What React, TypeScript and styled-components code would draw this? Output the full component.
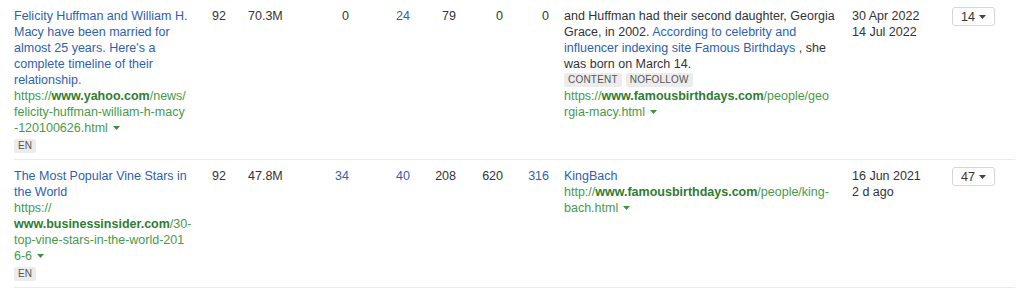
import React from 'react';
import styled, {createGlobalStyle} from 'styled-components';

const GlobalStyle = createGlobalStyle`
    html, body {
        margin: 0;
        padding: 0;
        background: #fff;
    }
    body {
        font-family: "Liberation Sans", Arial, Helvetica, sans-serif;
        font-size: 12.5px;
        line-height: 16px;
        color: #333;
    }
`;

// a url as shown in the table: the domain part is bold, lines wrap at fixed offsets
type UrlData = {
    href: string;
    domain: string;
    breaks: number[];
};

type Backlink = {
    title: string;
    source: UrlData;
    dr: string;
    traffic: string;
    metrics: {value: string; link?: boolean}[];
    anchorBefore?: string;
    anchorLink?: string;
    anchorAfter?: string;
    tags?: string[];
    target: UrlData;
    firstSeen: string;
    lastSeen: string;
    count: string;
};

const rows: Backlink[] = [
    {
        title: "Felicity Huffman and William H. Macy have been married for almost 25 years. Here's a complete timeline of their relationship.",
        source: {
            href: "https://www.yahoo.com/news/felicity-huffman-william-h-macy-120100626.html",
            domain: "www.yahoo.com",
            breaks: [27, 58],
        },
        dr: "92",
        traffic: "70.3M",
        metrics: [{value: "0"}, {value: "24", link: true}, {value: "79"}, {value: "0"}, {value: "0"}],
        anchorBefore: "and Huffman had their second daughter, Georgia Grace, in 2002. ",
        anchorLink: "According to celebrity and influencer indexing site Famous Birthdays",
        anchorAfter: " , she was born on March 14.",
        tags: ["CONTENT", "NOFOLLOW"],
        target: {
            href: "https://www.famousbirthdays.com/people/georgia-macy.html",
            domain: "www.famousbirthdays.com",
            breaks: [42],
        },
        firstSeen: "30 Apr 2022",
        lastSeen: "14 Jul 2022",
        count: "14",
    },
    {
        title: "The Most Popular Vine Stars in the World",
        source: {
            href: "https://www.businessinsider.com/30-top-vine-stars-in-the-world-2016-6",
            domain: "www.businessinsider.com",
            breaks: [8, 35, 66],
        },
        dr: "92",
        traffic: "47.8M",
        metrics: [{value: "34", link: true}, {value: "40", link: true}, {value: "208"}, {value: "620"}, {value: "316", link: true}],
        anchorLink: "KingBach",
        target: {
            href: "http://www.famousbirthdays.com/people/king-bach.html",
            domain: "www.famousbirthdays.com",
            breaks: [43],
        },
        firstSeen: "16 Jun 2021",
        lastSeen: "2 d ago",
        count: "47",
    },
];

const Caret: React.FC<{color: string}> = ({color}) => (
    <CaretSvg width="7" height="4" viewBox="0 0 7 4">
        <path d="M0 0 L7 0 L3.5 4 Z" fill={color}/>
    </CaretSvg>
);

const UrlLines: React.FC<{url: UrlData}> = ({url}) => {
    const {href, domain, breaks} = url;
    const ds = href.indexOf(domain);
    const de = ds + domain.length;
    const edges = [0, ...breaks, href.length];

    return (
        <Url>
            {edges.slice(0, -1).map((s, i) => {
                const e = edges[i + 1];
                const a = Math.max(s, Math.min(e, ds));
                const b = Math.max(a, Math.min(e, de));
                return (
                    <UrlLine key={i}>
                        {href.slice(s, a)}
                        {b > a ? <Domain>{href.slice(a, b)}</Domain> : null}
                        {href.slice(b, e)}
                        {i === edges.length - 2 ? <Caret color="#3f913f"/> : null}
                    </UrlLine>
                );
            })}
        </Url>
    );
};

export default function App() {
    return (
        <>
            <GlobalStyle/>
            <Table>
                {rows.map((row, i) => (
                    <Row key={i}>
                        <TitleCell>
                            <Title>{row.title}</Title>
                            <UrlLines url={row.source}/>
                            <TagRow $spaced>
                                <Tag>EN</Tag>
                            </TagRow>
                        </TitleCell>
                        <Cell>{row.dr}</Cell>
                        <Cell>{row.traffic}</Cell>
                        {row.metrics.map((m, j) => (
                            <NumCell key={j} $link={m.link}>{m.value}</NumCell>
                        ))}
                        <AnchorCell>
                            <div>
                                {row.anchorBefore}
                                <AnchorLink>{row.anchorLink}</AnchorLink>
                                {row.anchorAfter}
                            </div>
                            {row.tags ? (
                                <TagRow>
                                    {row.tags.map(t => <Tag key={t}>{t}</Tag>)}
                                </TagRow>
                            ) : null}
                            <UrlLines url={row.target}/>
                        </AnchorCell>
                        <Cell>
                            <div>{row.firstSeen}</div>
                            <div>{row.lastSeen}</div>
                        </Cell>
                        <Cell>
                            <Select>
                                {row.count}
                                <Caret color="#444"/>
                            </Select>
                        </Cell>
                    </Row>
                ))}
            </Table>
        </>
    );
}

const Table = styled.div`
    display: grid;
    margin-left: 14px;
    width: 1001px;
`;
const Row = styled.div`
    display: grid;
    grid-template-columns: 198px 36px 52px 49px 61px 46px 47px 46px 303px 100px 1fr;
    padding: 8px 0 5px;
    border-bottom: 1px solid #ebebeb;
`;
const Cell = styled.div`
    min-width: 0;
`;
const TitleCell = styled(Cell)`
    padding-right: 19px;
`;
const NumCell = styled(Cell)<{$link?: boolean}>`
    text-align: right;
    color: ${p => p.$link ? '#2f5fad' : '#333'};
`;
const AnchorCell = styled(Cell)`
    padding: 0 14px 0 15px;
`;
const Title = styled.div`
    color: #2f5fad;
`;
const AnchorLink = styled.span`
    color: #2f5fad;
`;
const Url = styled.div`
    color: #479a4a;
`;
const UrlLine = styled.div`
    white-space: nowrap;
`;
const Domain = styled.b`
    color: #2e7d32;
    font-weight: bold;
`;
const CaretSvg = styled.svg`
    display: inline-block;
    margin-left: 5px;
    vertical-align: 2px;
`;
const TagRow = styled.div<{$spaced?: boolean}>`
    display: flex;
    gap: 4px;
    height: 16px;
    align-items: center;
    margin-top: ${p => p.$spaced ? '2px' : '0'};
`;
const Tag = styled.span`
    display: inline-block;
    background: #ececec;
    color: #555;
    font-size: 10px;
    line-height: 14px;
    padding: 0 4px;
    border-radius: 2px;
    letter-spacing: 0.2px;
`;
const Select = styled.div`
    display: inline-flex;
    align-items: center;
    justify-content: space-between;
    box-sizing: border-box;
    width: 43px;
    height: 19px;
    margin-top: -1px;
    padding: 0 8px 0 8px;
    border: 1px solid #d6d6d6;
    border-radius: 3px;
    color: #333;
    & > svg {
        vertical-align: middle;
        margin-left: 0;
    }
`;
